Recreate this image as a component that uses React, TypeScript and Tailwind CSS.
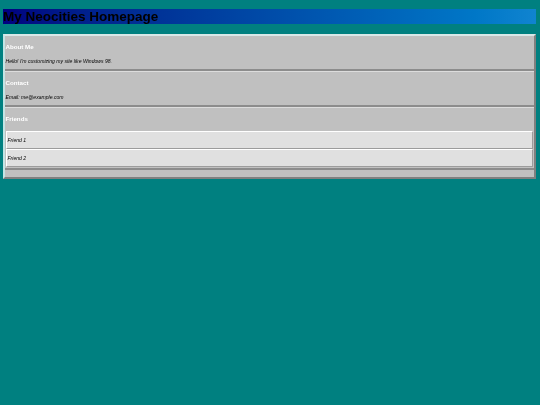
export default function App() {
  return (
    <div className="min-h-[405px] bg-[#008080] pt-[9px] px-[3px] [font-family:'Liberation_Sans',Arial,sans-serif] blur-[0.6px]">
      <h1 className="h-[15px] w-[533px] bg-gradient-to-r from-[#000080] to-[#1084d0] text-[13.5px] leading-[15px] font-bold text-black">My Neocities Homepage</h1>
      <div className="mt-[10px] w-[533px] h-[145px] bg-[#c0c0c0] border-2 border-t-[#d8e8e8] border-l-[#c4e4e4] border-r-[#808080] border-b-[#808080] flex flex-col">
        <section className="border-b-2 border-b-[#8c8c8c] h-[35px] pl-[0.5px] flex flex-col">
          <h2 className="mt-[7px] text-[6.2px] leading-[8px] font-bold text-white">About Me</h2>
          <p className="mt-[6.5px] text-[5.1px] leading-[7px] italic text-black">Hello! I'm customizing my site like Windows 98.</p>
        </section>
        <section className="border-t border-t-[#dcdcdc] border-b-2 border-b-[#8c8c8c] h-[36px] pl-[0.5px] flex flex-col">
          <h2 className="mt-[7px] text-[6.2px] leading-[8px] font-bold text-white">Contact</h2>
          <p className="mt-[7px] text-[5.1px] leading-[7px] italic text-black">Email: me@example.com</p>
        </section>
        <section className="border-t border-t-[#dcdcdc] border-b-2 border-b-[#8c8c8c] h-[63px] pl-[1px] flex flex-col">
          <h2 className="mt-[7px] -ml-[0.5px] text-[6.2px] leading-[8px] font-bold text-white">Friends</h2>
          <div className="mt-[8px] mr-[1px] flex flex-col">
            {["Friend 1", "Friend 2"].map((f) => (
              <div key={f} className="h-[18px] bg-[#e0e0e0] border-t border-l border-t-white border-l-white border-b border-r border-b-[#9c9c9c] border-r-[#9c9c9c] pl-[0.5px] pt-[1px] flex items-center text-[5.1px] italic text-black">{f}</div>
            ))}
          </div>
        </section>
      </div>
    </div>
  );
}
